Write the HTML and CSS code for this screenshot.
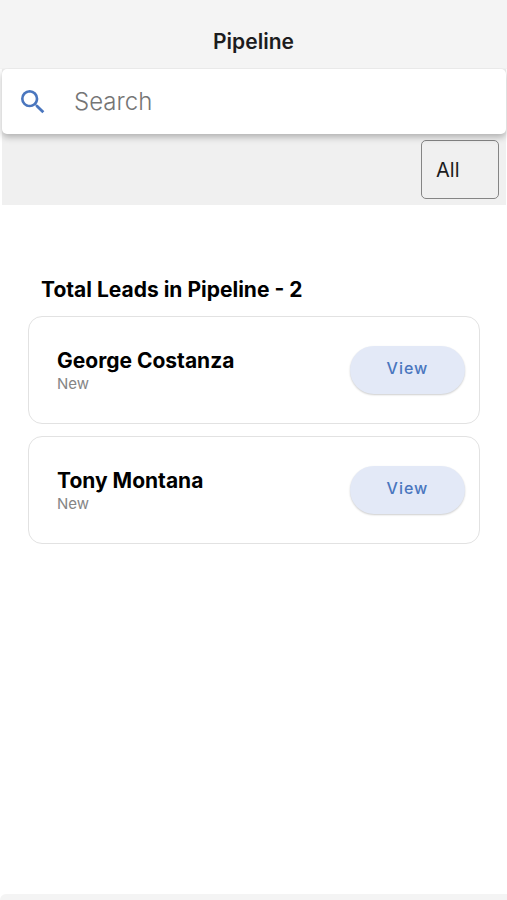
FILE: index.html
```html
<!doctype html>
<html lang="en">
<head>
<meta charset="utf-8" />
<title>Pipeline</title>
<meta name="viewport" content="width=device-width, initial-scale=1" />
<link rel="stylesheet" href="styles.css">
</head>
<body>
  <div class="screen">
    <header class="header">
      <h1 class="header-title">Pipeline</h1>
    </header>

    <!-- search + status filter -->
    <div class="toolbar">
      <form class="search" role="search">
        <label class="search-icon" for="search" aria-label="Search">
          <svg viewBox="0 0 24 24" width="32" height="32" aria-hidden="true">
            <path d="M9.5 3A6.5 6.5 0 0 1 16 9.5c0 1.61-.59 3.09-1.56 4.23l.27.27h.79l5 5-1.5 1.5-5-5v-.79l-.27-.27A6.516 6.516 0 0 1 9.5 16a6.5 6.5 0 0 1 0-13m0 2C7 5 5 7 5 9.5S7 14 9.5 14 14 12 14 9.5 12 5 9.5 5z"/>
          </svg>
        </label>
        <input class="search-input" id="search" type="text" placeholder="Search">
      </form>
      <div class="filter">
        <select class="filter-select" aria-label="Status">
          <option>All</option>
        </select>
      </div>
    </div>

    <main class="content">
      <h2 class="content-title">Total Leads in Pipeline - 2</h2>
      <ul class="leads">
        <li class="lead">
          <div class="lead-info">
            <h3 class="lead-name">George Costanza</h3>
            <p class="lead-status">New</p>
          </div>
          <button class="view-btn" type="button">View</button>
        </li>
        <li class="lead">
          <div class="lead-info">
            <h3 class="lead-name">Tony Montana</h3>
            <p class="lead-status">New</p>
          </div>
          <button class="view-btn" type="button">View</button>
        </li>
      </ul>
    </main>

    <footer class="tabbar"></footer>
  </div>
</body>
</html>
```
FILE: styles.css
```css
:root{
  --primary:#4a76be;
  --primary-soft:#e3e9f7;
  --bar:#f4f4f4;
  --filter:#f0f0f0;
  --line:#e2e2e2;
  --muted:#858585;
}

*{margin:0;padding:0;box-sizing:border-box}
body{
  background:#fff;color:#000;
  font-family:Inter,"Liberation Sans",sans-serif;
}

.screen{display:flex;flex-direction:column;min-height:100vh}

/* header */
.header{
  display:flex;justify-content:center;align-items:flex-end;
  height:69px;padding-bottom:13px;background:var(--bar);
}
.header-title{font-size:21px;line-height:28px;font-weight:600;color:#1c1c1e}

/* search */
.toolbar{margin:0 1px 0 2px;background:var(--filter)}
.search{
  display:flex;align-items:center;height:65px;padding-left:15px;
  background:#fff;border-radius:5px;
  box-shadow:0 3px 7px rgba(0,0,0,.28);
  clip-path:inset(-1px -2px -14px -2px);
}
.search-icon{display:flex;width:57px}
.search-icon svg{fill:var(--primary)}
.search-input{
  flex:1;min-width:0;height:100%;border:0;outline:0;background:none;
  font-family:inherit;font-size:24px;font-weight:300;color:#333;
}
.search-input::placeholder{color:#757575;opacity:1}

/* filter */
.filter{display:flex;justify-content:flex-end;padding:6px 7px}
.filter-select{
  appearance:none;width:78px;height:59px;padding:0 14px;
  border:1px solid #858585;border-radius:5px;background:none;
  font-family:inherit;font-size:20px;color:#1c1c1e;
}

/* leads */
.content{flex:1;padding:71px 27px 24px 28px}
.content-title{
  padding:0 13px;margin-bottom:12px;
  font-size:21px;line-height:28px;font-weight:700;
}
.leads{display:flex;flex-direction:column;gap:12px;list-style:none}
.lead{
  display:flex;justify-content:space-between;align-items:center;
  height:108px;padding:0 14px 0 28px;
  border:1px solid var(--line);border-radius:14px;
}
.lead-name{font-size:21px;line-height:28px;font-weight:700}
.lead-status{font-size:15px;line-height:18px;color:var(--muted)}
.view-btn{
  width:115px;height:48px;padding-bottom:4px;
  border:0;border-radius:24px;background:var(--primary-soft);
  box-shadow:0 1px 2px rgba(0,0,0,.2);
  font-family:inherit;font-size:16px;font-weight:500;letter-spacing:1px;
  color:var(--primary);
}

/* bottom bar */
.tabbar{height:6px;background:var(--bar);border-radius:6px 0 0 0}
```
